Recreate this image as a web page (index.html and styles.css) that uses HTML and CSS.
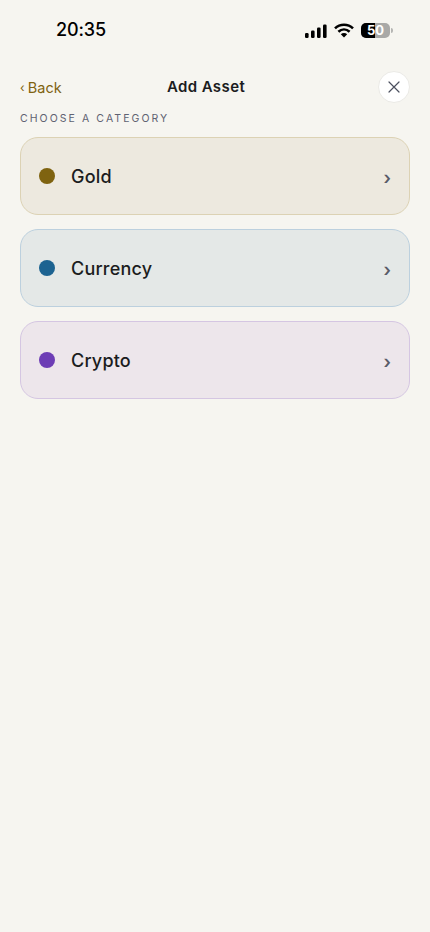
FILE: index.html
```html
<!DOCTYPE html>
<html lang="en">
<head>
<meta charset="utf-8">
<title>Add Asset</title>
<link rel="stylesheet" href="styles.css">
</head>
<body>
<div class="screen">
  <div class="status">
    <span class="time">20:35</span>
    <div class="status-icons">
      <svg class="signal" width="22" height="14" viewBox="0 0 22 14"><rect x="0" y="9" width="3.6" height="5" rx="1.2"/><rect x="6" y="6.5" width="3.6" height="7.5" rx="1.2"/><rect x="12" y="3.5" width="3.6" height="10.5" rx="1.2"/><rect x="18" y="0.5" width="3.6" height="13.5" rx="1.2"/></svg>
      <svg class="wifi" width="20" height="15" viewBox="0 0 20 15"><path d="M1 5.4C6 .6 14 .6 19 5.4" fill="none" stroke="#000" stroke-width="2.6"/><path d="M4.400 8.800c3.300-3 7.900-3 11.200 0" fill="none" stroke="#000" stroke-width="2.6"/><path d="M10 14.500l-3.200-3.200c1.800-1.600 4.600-1.600 6.400 0z"/></svg>
      <div class="battery"><div class="battery-body"><span class="battery-fill"></span><span class="battery-text">50</span></div><span class="battery-cap"></span></div>
    </div>
  </div>
  <header class="nav">
    <a class="back"><span class="back-chev">‹</span>Back</a>
    <h1 class="title">Add Asset</h1>
    <button class="close" aria-label="Close"><svg width="12" height="12" viewBox="0 0 12 12"><path d="M1 1l10 10M11 1L1 11" stroke="#4b4f5e" stroke-width="1.200" fill="none" stroke-linecap="round"/></svg></button>
  </header>
  <p class="label">CHOOSE A CATEGORY</p>
  <div class="list">
    <div class="card gold"><span class="dot"></span><span class="name">Gold</span><span class="chev">›</span></div>
    <div class="card currency"><span class="dot"></span><span class="name">Currency</span><span class="chev">›</span></div>
    <div class="card crypto"><span class="dot"></span><span class="name">Crypto</span><span class="chev">›</span></div>
  </div>
</div>
</body>
</html>
```
FILE: styles.css
```css
* { box-sizing: border-box; }
html, body { margin: 0; padding: 0; }
body { background: #f6f5f0; font-family: "Inter", "Liberation Sans", sans-serif; color: #1b1c20; }
.screen { width: 430px; height: 932px; overflow: hidden; padding: 0 20px; }
.status { height: 71px; display: flex; justify-content: space-between; align-items: flex-start; padding: 18px 17px 0 36px; }
.time { font-size: 18px; font-weight: 500; line-height: 24px; color: #000; letter-spacing: -0.1px; }
.status-icons { display: flex; align-items: center; gap: 6px; height: 24px; }
.signal { fill: #000; margin-top: 1px; margin-right: 1px; }
.battery { display: flex; align-items: center; gap: 1px; margin-left: 1px; }
.battery-body { position: relative; width: 29px; height: 15px; border-radius: 5px; background: #a9a9a7; overflow: hidden; }
.battery-fill { position: absolute; left: 0; top: 0; bottom: 0; width: 14px; background: #000; }
.battery-text { position: absolute; inset: 0; text-align: center; font-size: 13px; line-height: 15px; font-weight: 700; color: #fff; }
.battery-cap { width: 2px; height: 5px; background: #b5b5b3; border-radius: 0 2px 2px 0; }
.nav { height: 32px; display: flex; align-items: center; justify-content: space-between; position: relative; }
.back { font-size: 14.500px; color: #7f6310; display: flex; align-items: center; gap: 3px; letter-spacing: 0.05px; }
.back-chev { font-size: 12px; }
.title { position: absolute; left: 0; right: 18px; margin: 0; text-align: center; font-size: 15px; font-weight: 600; line-height: 32px; color: #1b1c20; letter-spacing: 0.4px; }
.close { position: relative; width: 32px; height: 32px; padding: 0; border-radius: 50%; border: 1px solid #ebeae6; background: #fff; display: flex; align-items: center; justify-content: center; }
.label { margin: 9px 0 12px; font-size: 10.500px; line-height: 13px; letter-spacing: 2.070px; color: #5f6272; font-weight: 400; }
.list { display: flex; flex-direction: column; gap: 14px; }
.card { height: 78px; border-radius: 18px; border: 1px solid; display: flex; align-items: center; padding: 0 18px; }
.dot { width: 16px; height: 16px; border-radius: 50%; margin-right: 16px; }
.name { flex: 1; font-size: 18px; font-weight: 500; color: #1b1c20; letter-spacing: 0.2px; }
.chev { font-size: 18px; font-weight: 600; color: #5a5c68; line-height: 24px; position: relative; top: 2px; }
.gold { background: #ede9df; border-color: #dcd2b4; }
.gold .dot { background: #7f6310; }
.currency { background: #e4e8e7; border-color: #bcd0de; }
.currency .dot { background: #1c6391; }
.crypto { background: #ede6eb; border-color: #d5c6e2; }
.crypto .dot { background: #6d3db5; }
```
